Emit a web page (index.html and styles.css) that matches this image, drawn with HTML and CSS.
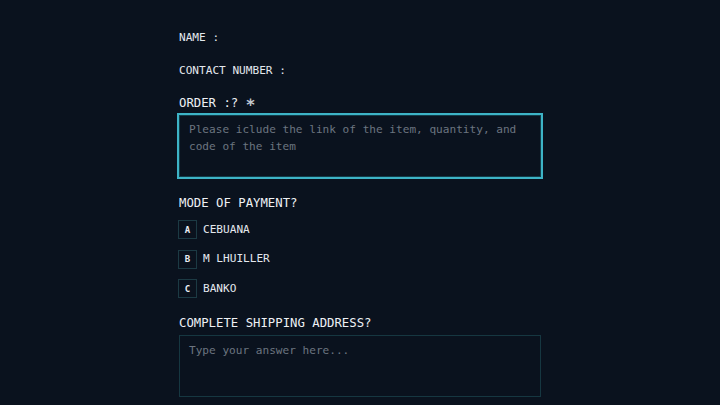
FILE: index.html
```html
<!DOCTYPE html>
<html lang="en">
<head>
<meta charset="utf-8">
<title>Order form</title>
<link rel="stylesheet" href="styles.css">
</head>
<body>
<main class="form">
  <div class="field-label first">NAME :</div>
  <div class="field-label second">CONTACT NUMBER :</div>
  <div class="question order-q">ORDER :? <span class="star">∗</span></div>
  <textarea class="answer focused" placeholder="Please iclude the link of the item, quantity, and code of the item"></textarea>
  <div class="question pay-q">MODE OF PAYMENT?</div>
  <ul class="options">
    <li class="option"><span class="key">A</span><span class="opt-text">CEBUANA</span></li>
    <li class="option"><span class="key">B</span><span class="opt-text">M LHUILLER</span></li>
    <li class="option"><span class="key">C</span><span class="opt-text">BANKO</span></li>
  </ul>
  <div class="question ship-q">COMPLETE SHIPPING ADDRESS?</div>
  <textarea class="answer plain" placeholder="Type your answer here..."></textarea>
</main>
</body>
</html>
```

FILE: styles.css
```css
html, body {
  margin: 0;
  padding: 0;
  background: #0a121e;
  height: 100%;
  overflow: hidden;
}
.form {
  width: 362px;
  margin: 0 auto;
  display: flex;
  flex-direction: column;
  font-family: "DejaVu Sans Mono", "Liberation Mono", monospace;
  color: #e4e8ee;
}
.field-label {
  font-size: 11.1px;
  line-height: 16px;
  height: 16px;
}
.first { margin-top: 30px; }
.second { margin-top: 17px; }
.question {
  font-size: 12.3px;
  line-height: 18px;
  height: 18px;
  color: #eef1f5;
}
.order-q { margin-top: 14px; }
.star {
  font-size: 16px;
  font-weight: bold;
  color: #c3c9d1;
}
.answer {
  display: block;
  box-sizing: border-box;
  resize: none;
  background: #0a121e;
  font-family: "DejaVu Sans Mono", "Liberation Mono", monospace;
  font-size: 11.1px;
  line-height: 17px;
  color: #e4e8ee;
  outline: none;
}
.answer::placeholder {
  color: #6c7580;
}
.focused {
  margin: 2px -2px 0;
  width: 366px;
  height: 66px;
  border: 2px solid #3db3c6;
  box-shadow: inset 0 0 0 1px #123c48;
  padding: 6px 10px;
}
.pay-q { margin-top: 15px; }
.options {
  list-style: none;
  margin: 8px 0 0;
  padding: 0;
  display: flex;
  flex-direction: column;
  gap: 10.5px;
}
.option {
  display: flex;
  align-items: center;
  gap: 6px;
  height: 19px;
}
.key {
  box-sizing: border-box;
  width: 19px;
  height: 19px;
  margin-left: -1px;
  border: 1px solid #1c3a44;
  display: flex;
  align-items: center;
  justify-content: center;
  font-size: 9px;
  font-weight: bold;
  color: #e9edf2;
}
.opt-text {
  font-size: 11.1px;
  line-height: 16px;
}
.ship-q { margin-top: 16px; }
.plain {
  margin-top: 3px;
  width: 362px;
  height: 62px;
  border: 1px solid #163741;
  padding: 6px 9px;
}
```
